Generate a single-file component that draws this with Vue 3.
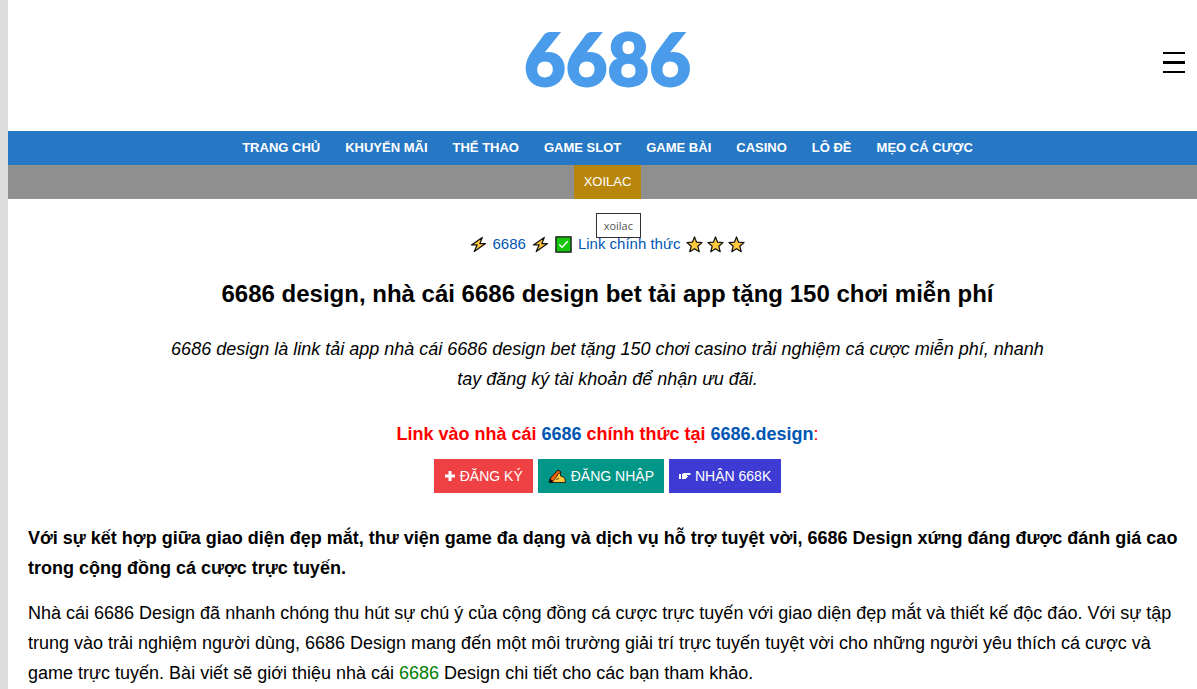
<script setup>
const menu = ['TRANG CHỦ', 'KHUYẾN MÃI', 'THỂ THAO', 'GAME SLOT', 'GAME BÀI', 'CASINO', 'LÔ ĐỀ', 'MẸO CÁ CƯỢC']
</script>

<template>
  <div class="page">
    <header class="header">
      <a class="logo" href="#">6686</a>
      <button class="toggle" type="button" aria-label="Menu">
        <svg width="22" height="21" viewBox="0 0 22 21" shape-rendering="crispEdges">
          <path d="M0 0h22v2H0zM0 9h22v3H0zM0 19h22v2H0z" fill="#000" />
        </svg>
      </button>
    </header>

    <nav class="nav">
      <a v-for="item in menu" :key="item" href="#">{{ item }}</a>
    </nav>
    <div class="subnav">
      <a href="#">XOILAC<span class="tip">xoilac</span></a>
    </div>

    <main class="content">
      <p class="official">
        <svg class="emoji" viewBox="0 0 18 18"><path d="M13 1.500L1.500 9.500h6l-3 7L16.500 8h-6z" class="gold" /></svg>
        <a href="#">6686</a>
        <svg class="emoji" viewBox="0 0 18 18"><path d="M13 1.500L1.500 9.500h6l-3 7L16.500 8h-6z" class="gold" /></svg>
        <svg class="emoji" viewBox="0 0 18 18">
          <path d="M1 1h16v16H1z" fill="#16c60c" stroke="#111" stroke-width="1.4" />
          <path d="M4.500 9l3 3 6-6.500" fill="none" stroke="#fff" stroke-width="1.5" />
        </svg>
        <a href="#">Link chính thức</a>
        <span class="stars">
          <svg v-for="n in 3" :key="n" class="emoji" viewBox="0 0 18 18">
            <path d="M9 1l2.200 5.600 5.800.3-4.500 3.900 1.500 5.900L9 13.400l-5 3.300 1.500-5.900L1 6.900l5.800-.3z" class="gold" />
          </svg>
        </span>
      </p>

      <h1>6686 design, nhà cái 6686 design bet tải app tặng 150 chơi miễn phí</h1>

      <p class="intro">
        6686 design là link tải app nhà cái 6686 design bet tặng 150 chơi casino trải nghiệm cá cược miễn phí, nhanh
        tay đăng ký tài khoản để nhận ưu đãi.
      </p>

      <p class="entry">
        <strong>Link vào nhà cái <a href="#">6686</a> chính thức tại <a href="#">6686.design</a></strong>:
      </p>

      <div class="actions">
        <a class="red" href="#">
          <svg width="12" height="12" viewBox="0 0 12 12"><path d="M4.500 1h3v3.500H11v3H7.500V11h-3V7.500H1v-3h3.500z" fill="#fff" /></svg>
          ĐĂNG KÝ
        </a>
        <a class="teal" href="#">
          <svg width="19" height="16" viewBox="0 0 19 16">
            <path d="M1 14.500L2.500 10 10 2l3 2-5 10.500z" fill="#f7630c" stroke="#111" stroke-linejoin="round" />
            <path d="M4 14.500l5-6.500 1.500-3 2 .5v2.500l4 1.500 1 5z" fill="#ffc83d" stroke="#111" stroke-width=".8" stroke-linejoin="round" />
            <path d="M1 14.500l1-4 3 2.500-1 1.500z" fill="#111" />
            <path d="M8 11.500l3-1" fill="none" stroke="#111" stroke-width=".7" />
          </svg>
          ĐĂNG NHẬP
        </a>
        <a class="blue" href="#">
          <svg width="12" height="10" viewBox="0 0 12 10">
            <path d="M0 3h2v5H0z" fill="#fff" />
            <path d="M3 3l2-1h6.500v2H8v1h1v1H8v1H7v1H3z" fill="#fff" />
          </svg>
          NHẬN 668K
        </a>
      </div>

      <p class="lead">
        Với sự kết hợp giữa giao diện đẹp mắt, thư viện game đa dạng và dịch vụ hỗ trợ tuyệt vời, 6686 Design xứng đáng
        được đánh giá cao trong cộng đồng cá cược trực tuyến.
      </p>
      <p>
        Nhà cái 6686 Design đã nhanh chóng thu hút sự chú ý của cộng đồng cá cược trực tuyến với giao diện đẹp mắt và
        thiết kế độc đáo. Với sự tập trung vào trải nghiệm người dùng, 6686 Design mang đến một môi trường giải trí trực
        tuyến tuyệt vời cho những người yêu thích cá cược và game trực tuyến. Bài viết sẽ giới thiệu nhà cái
        <a class="green" href="#">6686</a> Design chi tiết cho các bạn tham khảo.
      </p>
    </main>
  </div>
</template>

<style>
body {
  overflow: hidden;
}
</style>

<style scoped>
.page {
  min-height: 100vh;
  margin-right: -10px;
  box-sizing: border-box;
  border-left: 8px solid #ddd;
  background: #fff;
  color: #000;
  font: 18px/30px "Liberation Sans", Arial, sans-serif;
}
a {
  color: #0056b3;
  text-decoration: none;
}
p,
h1 {
  margin: 0 0 15px;
}
.header {
  display: grid;
  grid-template-columns: 1fr auto 1fr;
  align-items: center;
  height: 131px;
  padding: 0 22px;
  box-sizing: border-box;
}
.logo {
  grid-column: 2;
  padding-bottom: 16px;
  color: #4a9ceb;
  font: 900 72px/80px Lato, sans-serif;
  -webkit-text-stroke: 2px #4a9ceb;
}
.toggle {
  justify-self: end;
  display: flex;
  padding: 0 0 6px;
  border: 0;
  background: none;
}
.nav,
.subnav {
  display: flex;
  justify-content: center;
  font-size: 13px;
  line-height: 34px;
}
.nav {
  gap: 25px;
  background: #2678c5;
  font-weight: 700;
}
.nav a,
.subnav a {
  color: #fff;
}
.subnav {
  background: #8f8f8f;
}
.subnav a {
  position: relative;
  padding: 0 10px;
  background: #b8860b;
}
.tip {
  position: absolute;
  top: 48px;
  left: 22px;
  padding: 0 7px;
  border: 1px solid #333;
  background: #fff;
  color: #555;
  font: 11px/23px "Open Sans", sans-serif;
}
.content {
  padding: 30px 20px 0;
}
.official {
  display: flex;
  align-items: center;
  justify-content: center;
  gap: 6px;
  margin-bottom: 20px;
  font-size: 15px;
}
.stars {
  display: flex;
  gap: 4px;
}
.emoji {
  width: 17px;
  height: 17px;
}
.gold {
  fill: #ffc83d;
  stroke: #111;
  stroke-width: 1.3;
  stroke-linejoin: round;
}
h1 {
  margin-bottom: 25px;
  font-size: 24px;
  line-height: 30px;
  text-align: center;
}
.intro {
  max-width: 77%;
  margin: 0 auto 25px;
  font-style: italic;
  text-align: center;
}
.entry {
  margin-bottom: 10px;
  color: #f00;
  text-align: center;
}
.actions {
  display: flex;
  justify-content: center;
  gap: 5px;
  margin-bottom: 30px;
  font-size: 14px;
  line-height: 34px;
}
.actions a {
  display: flex;
  align-items: center;
  gap: 4px;
  padding: 0 10px;
  color: #fff;
}
.red {
  background: #ef4044;
}
.teal {
  background: #009688;
}
.blue {
  background: #3d3bd3;
}
.lead {
  font-weight: 700;
}
.green {
  color: #008000;
}
</style>
